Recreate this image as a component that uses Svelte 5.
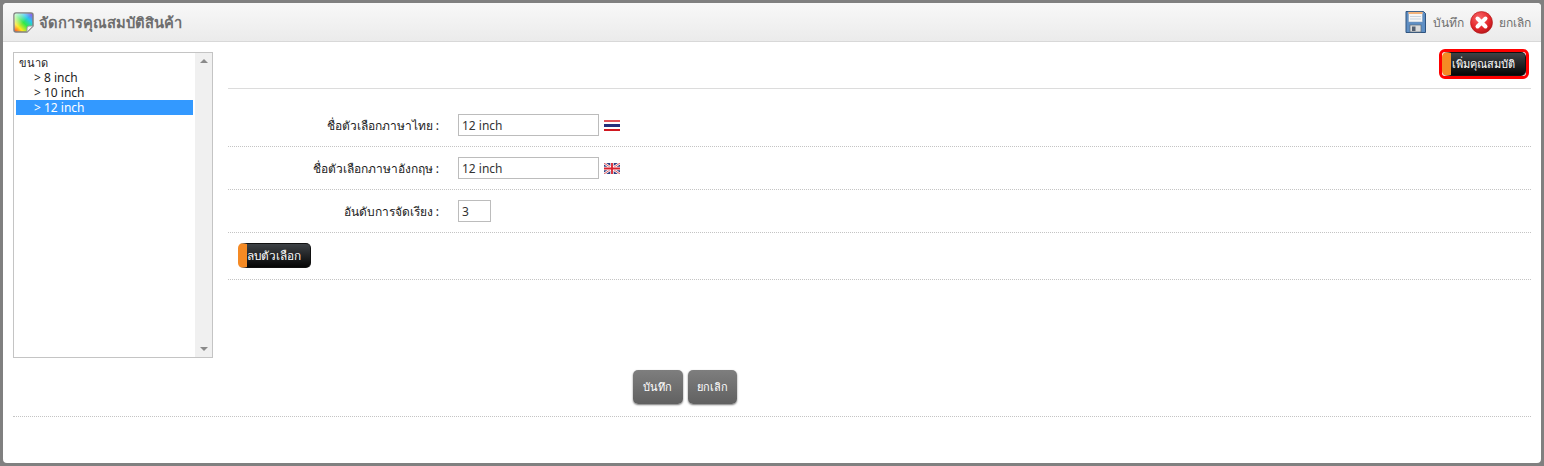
<script>
  let options = ['8 inch', '10 inch', '12 inch'];
  let selected = '12 inch';
  let nameTh = '12 inch';
  let nameEn = '12 inch';
  let order = '3';
</script>

<div class="frame">
  <header class="head">
    <div class="title">
      <svg class="logo" width="21" height="21" viewBox="0 0 21 21">
        <defs>
          <linearGradient id="rb" x1="0" y1="1" x2="1" y2="0">
            <stop offset="0" stop-color="#ff3030" />
            <stop offset="0.25" stop-color="#ffe81e" />
            <stop offset="0.5" stop-color="#2fe84a" />
            <stop offset="0.72" stop-color="#27c7f0" />
            <stop offset="1" stop-color="#b03ff0" />
          </linearGradient>
          <linearGradient id="rb2" x1="0" y1="0" x2="1" y2="1">
            <stop offset="0" stop-color="#fff" stop-opacity="0.85" />
            <stop offset="0.5" stop-color="#fff" stop-opacity="0" />
          </linearGradient>
        </defs>
        <path d="M3 1h15a2 2 0 0 1 2 2v11l-6 6H3a2 2 0 0 1-2-2V3a2 2 0 0 1 2-2z" fill="url(#rb)" stroke="#808080" stroke-width="1.500" />
        <path d="M3 1.500h15a1.500 1.500 0 0 1 1.500 1.500v11l-5.500 5.500H3A1.500 1.500 0 0 1 1.500 18V3A1.500 1.500 0 0 1 3 1.500z" fill="url(#rb2)" />
        <path d="M20 14h-4a2 2 0 0 0-2 2v4z" fill="#f4f4f4" stroke="#999" />
      </svg>
      <span>จัดการคุณสมบัติสินค้า</span>
    </div>
    <div class="tools">
      <svg class="save" width="21" height="22" viewBox="0 0 21 22">
        <path d="M1 .5h17.500l2 2v19H1z" fill="#5f8fc4" stroke="#2f5480" />
        <rect x="3.500" y="1" width="14" height="10" fill="#f6f6f6" stroke="#7a97b8" stroke-width="0.500" />
        <rect x="3.500" y="1" width="14" height="2" fill="#f2b27a" />
        <path d="M5 5.500h11M5 8h11" stroke="#c9d3de" />
        <rect x="5" y="14" width="11" height="7" fill="#dcdcdc" stroke="#5a6a7a" stroke-width="0.700" />
        <rect x="7" y="15.500" width="3.500" height="4.500" fill="#556070" />
      </svg>
      <span class="tool-text">บันทึก</span>
      <svg width="23" height="23" viewBox="0 0 23 23">
        <defs>
          <radialGradient id="red" cx="0.4" cy="0.3" r="0.8">
            <stop offset="0" stop-color="#f8686a" />
            <stop offset="0.6" stop-color="#e3272b" />
            <stop offset="1" stop-color="#a81216" />
          </radialGradient>
        </defs>
        <circle cx="11.500" cy="11.500" r="11" fill="url(#red)" stroke="#b01a1a" stroke-width="0.600" />
        <path d="M7.500 7.500l8 8M15.500 7.500l-8 8" stroke="#fff" stroke-width="4" stroke-linecap="round" />
      </svg>
      <span class="tool-text">ยกเลิก</span>
    </div>
  </header>

  <div class="body">
    <div class="main">
      <div class="tree">
        <ul>
          <li class="group">ขนาด</li>
          {#each options as opt}
            <li class="opt" class:sel={opt === selected}>&gt; {opt}</li>
          {/each}
        </ul>
        <div class="scroll">
          <span class="arrow up"></span>
          <span class="arrow down"></span>
        </div>
      </div>

      <div class="panel">
        <div class="top">
          <div class="focus"><button class="dark">เพิ่มคุณสมบัติ</button></div>
        </div>
        <div class="row first">
          <span class="label">ชื่อตัวเลือกภาษาไทย :</span>
          <input class="text" bind:value={nameTh} />
          <svg class="flag" width="16" height="11" viewBox="0 0 16 11">
            <rect width="16" height="11" fill="#fff" />
            <rect y="0" width="16" height="2" fill="#e0545a" />
            <rect y="4" width="16" height="3" fill="#232f7c" />
            <rect y="9" width="16" height="2" fill="#d01820" />
          </svg>
        </div>
        <div class="row">
          <span class="label">ชื่อตัวเลือกภาษาอังกฤษ :</span>
          <input class="text" bind:value={nameEn} />
          <svg class="flag" width="16" height="11" viewBox="0 0 16 11">
            <rect width="16" height="11" fill="#2f3f80" />
            <path d="M0 0l16 11M16 0L0 11" stroke="#fff" stroke-width="2.400" />
            <path d="M0 0l16 11M16 0L0 11" stroke="#d8404a" stroke-width="0.900" />
            <path d="M8 0v11M0 5.500h16" stroke="#fff" stroke-width="3.400" />
            <path d="M8 0v11M0 5.500h16" stroke="#d8202c" stroke-width="1.800" />
          </svg>
        </div>
        <div class="row">
          <span class="label">อันดับการจัดเรียง :</span>
          <input class="text short" bind:value={order} />
        </div>
        <div class="row del">
          <button class="dark">ลบตัวเลือก</button>
        </div>
      </div>
    </div>

    <div class="actions">
      <button class="grey">บันทึก</button>
      <button class="grey narrow">ยกเลิก</button>
    </div>
  </div>
</div>

<style>
  :global(body) {
    margin: 0;
    background: #808080;
  }

  .frame {
    box-sizing: border-box;
    height: 466px;
    border: 3px solid #808080;
    border-radius: 7px;
    overflow: hidden;
    background: #fff;
    font-family: "Noto Sans", "Liberation Sans", sans-serif;
    font-size: 12px;
    color: #222;
  }

  .head {
    display: flex;
    justify-content: space-between;
    align-items: center;
    box-sizing: border-box;
    height: 39px;
    padding: 0 10px;
    background: linear-gradient(#f8f8f8, #ebebeb);
    border-bottom: 1px solid #d8d8d8;
  }

  .title {
    display: flex;
    align-items: center;
    gap: 5px;
    font-size: 14.700px;
    font-weight: bold;
    color: #6e6e6e;
  }

  .tools {
    display: flex;
    align-items: center;
    gap: 6px;
  }

  .save {
    margin-right: 1px;
  }

  .tool-text {
    color: #6e6e6e;
  }

  .body {
    padding: 10px 10px 0;
  }

  .main {
    display: flex;
    gap: 15px;
  }

  .tree {
    display: flex;
    flex: none;
    box-sizing: border-box;
    width: 200px;
    height: 306px;
    border: 1px solid #c4c4c4;
  }

  ul {
    flex: 1;
    list-style: none;
    margin: 0;
    padding: 2px 2px;
    font-size: 12px;
    line-height: 15px;
  }

  .group {
    padding-left: 3px;
    font-size: 11px;
  }

  .opt {
    padding-left: 18px;
  }

  .sel {
    background: #3399ff;
    color: #fff;
  }

  .scroll {
    display: flex;
    flex-direction: column;
    justify-content: space-between;
    align-items: center;
    width: 17px;
    padding: 6px 0;
    box-sizing: border-box;
    background: #f0f0f0;
  }

  .arrow {
    width: 0;
    height: 0;
    border-left: 4px solid transparent;
    border-right: 4px solid transparent;
  }

  .up {
    border-bottom: 4px solid #8a8a8a;
  }

  .down {
    border-top: 4px solid #8a8a8a;
  }

  .panel {
    flex: 1;
    margin-top: -3px;
  }

  .top {
    display: flex;
    justify-content: flex-end;
    box-sizing: border-box;
    height: 40px;
    padding-right: 2px;
    border-bottom: 1px solid #dcdcdc;
  }

  .focus {
    box-sizing: border-box;
    height: 30px;
    border: 3px solid #f00;
    border-radius: 6px;
  }

  .dark {
    display: block;
    box-sizing: border-box;
    width: 73px;
    height: 25px;
    padding: 0;
    border: 1px solid #111;
    border-left: 9px solid #f58a24;
    border-radius: 5px;
    background: linear-gradient(#3e4246, #060606);
    color: #fff;
    font-family: inherit;
    font-size: 11.800px;
    text-align: left;
  }

  .focus .dark {
    width: 84px;
    height: 24px;
    padding-left: 1px;
    font-size: 11px;
  }

  .row {
    display: flex;
    align-items: center;
    box-sizing: border-box;
    height: 43px;
    border-bottom: 1px dotted #c4c4c4;
  }

  .first {
    height: 58px;
    padding-top: 15px;
  }

  .del {
    height: 47px;
    padding: 0 0 2px 10px;
  }

  .label {
    box-sizing: border-box;
    width: 230px;
    padding-right: 19px;
    text-align: right;
    color: #222;
  }

  .text {
    box-sizing: border-box;
    width: 141px;
    height: 22px;
    padding: 0 3px;
    border: 1px solid #bcbcbc;
    font-family: inherit;
    font-size: 12px;
    color: #333;
    outline: none;
  }

  .short {
    width: 33px;
  }

  .flag {
    margin-left: 5px;
  }

  .actions {
    display: flex;
    justify-content: center;
    gap: 5px;
    box-sizing: border-box;
    height: 47px;
    margin-top: 12px;
    padding-right: 175px;
    border-bottom: 1px dotted #c4c4c4;
  }

  .grey {
    height: 34px;
    width: 50px;
    padding: 0;
    border: none;
    border-radius: 5px;
    background: linear-gradient(#7e7e7e, #616161);
    box-shadow: 0 1px 2px #777;
    color: #fff;
    font-family: inherit;
    font-size: 11px;
  }

  .narrow {
    width: 49px;
  }
</style>
